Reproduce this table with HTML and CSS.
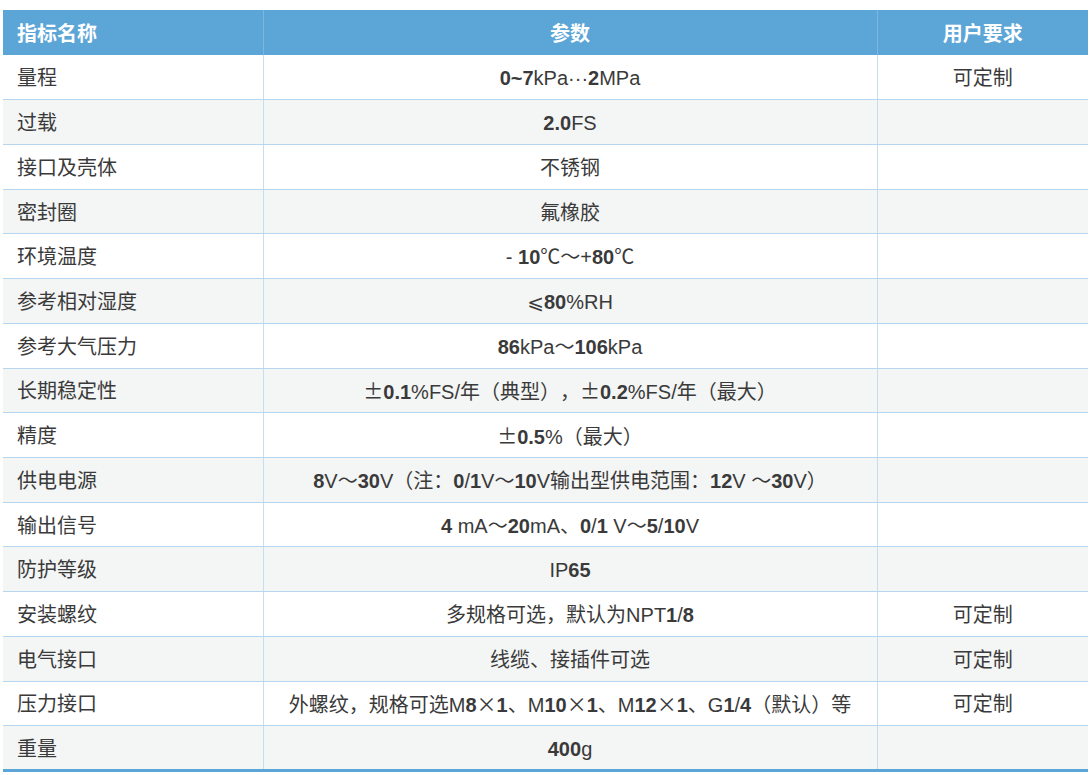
FILE: index.html
```html
<!DOCTYPE html>
<html lang="zh">
<head>
<meta charset="utf-8">
<link rel="stylesheet" href="styles.css">
</head>
<body>
<table class="spec">
  <colgroup>
    <col class="c-name">
    <col class="c-val">
    <col class="c-req">
  </colgroup>
  <thead>
    <tr><th class="left">指标名称</th><th>参数</th><th>用户要求</th></tr>
  </thead>
  <tbody>
    <tr><td class="left">量程</td><td><b>0~7</b>kPa···<b>2</b>MPa</td><td>可定制</td></tr>
    <tr><td class="left">过载</td><td><b>2.0</b>FS</td><td></td></tr>
    <tr><td class="left">接口及壳体</td><td>不锈钢</td><td></td></tr>
    <tr><td class="left">密封圈</td><td>氟橡胶</td><td></td></tr>
    <tr><td class="left">环境温度</td><td>- <b>10</b>℃～+<b>80</b>℃</td><td></td></tr>
    <tr><td class="left">参考相对湿度</td><td>⩽<b>80</b>%RH</td><td></td></tr>
    <tr><td class="left">参考大气压力</td><td><b>86</b>kPa～<b>106</b>kPa</td><td></td></tr>
    <tr><td class="left">长期稳定性</td><td><span class="wide">±</span><b>0.1</b>%FS/年（典型），<span class="wide">±</span><b>0.2</b>%FS/年（最大）</td><td></td></tr>
    <tr><td class="left">精度</td><td><span class="wide">±</span><b>0.5</b>%（最大）</td><td></td></tr>
    <tr><td class="left">供电电源</td><td><b>8</b>V～<b>30</b>V（注：<b>0</b>/<b>1</b>V～<b>10</b>V输出型供电范围：<b>12</b>V ～<b>30</b>V）</td><td></td></tr>
    <tr><td class="left">输出信号</td><td><b>4</b> mA～<b>20</b>mA、<b>0</b>/<b>1</b> V～<b>5</b>/<b>10</b>V</td><td></td></tr>
    <tr><td class="left">防护等级</td><td>IP<b>65</b></td><td></td></tr>
    <tr><td class="left">安装螺纹</td><td>多规格可选，默认为NPT<b>1</b>/<b>8</b></td><td>可定制</td></tr>
    <tr><td class="left">电气接口</td><td>线缆、接插件可选</td><td>可定制</td></tr>
    <tr><td class="left">压力接口</td><td>外螺纹，规格可选M<b>8</b><span class="wide">×</span><b>1</b>、M<b>10</b><span class="wide">×</span><b>1</b>、M<b>12</b><span class="wide">×</span><b>1</b>、G<b>1</b>/<b>4</b>（默认）等</td><td>可定制</td></tr>
    <tr><td class="left">重量</td><td><b>400</b>g</td><td></td></tr>
  </tbody>
</table>
</body>
</html>
```
FILE: styles.css
```css
html, body {
  margin: 0;
  padding: 0;
  background: #ffffff;
}
body {
  padding: 10px 3px 0 3px;
  font-family: "Liberation Sans", "Noto Sans CJK SC", "DejaVu Sans", sans-serif;
  color: #3a3a3a;
  font-size: 20px;
  text-spacing-trim: space-all;
}
.spec {
  width: 1085px;
  border-collapse: collapse;
  table-layout: fixed;
  border-bottom: 3px solid #5ca5d7;
}
.c-name { width: 260px; }
.c-val { width: 614px; }
.c-req { width: 211px; }
.spec th {
  background: #5ca5d7;
  color: #ffffff;
  font-family: "Noto Sans CJK SC", sans-serif;
  font-weight: 700;
  font-size: 20px;
  height: 45px;
  padding: 0;
  text-align: center;
  border-right: 1px solid #7ab6e0;
}
.spec th:last-child { border-right: none; }
.spec tbody tr {
  height: 44.72px;
}
.spec tbody tr:nth-child(even) td {
  background: #f4f5f5;
}
.spec td {
  padding: 2px 0 0 0;
  text-align: center;
  vertical-align: middle;
  border-bottom: 1px solid #b6d6f0;
  border-right: 1px solid #c4def2;
  line-height: 1;
}
.spec td:last-child { border-right: none; }
.spec tbody tr:last-child td { border-bottom: none; }
.spec .left {
  text-align: left;
  padding-left: 14px;
}
.spec b {
  font-weight: 700;
}
.wide {
  font-family: "Noto Sans CJK SC", sans-serif;
}
```
